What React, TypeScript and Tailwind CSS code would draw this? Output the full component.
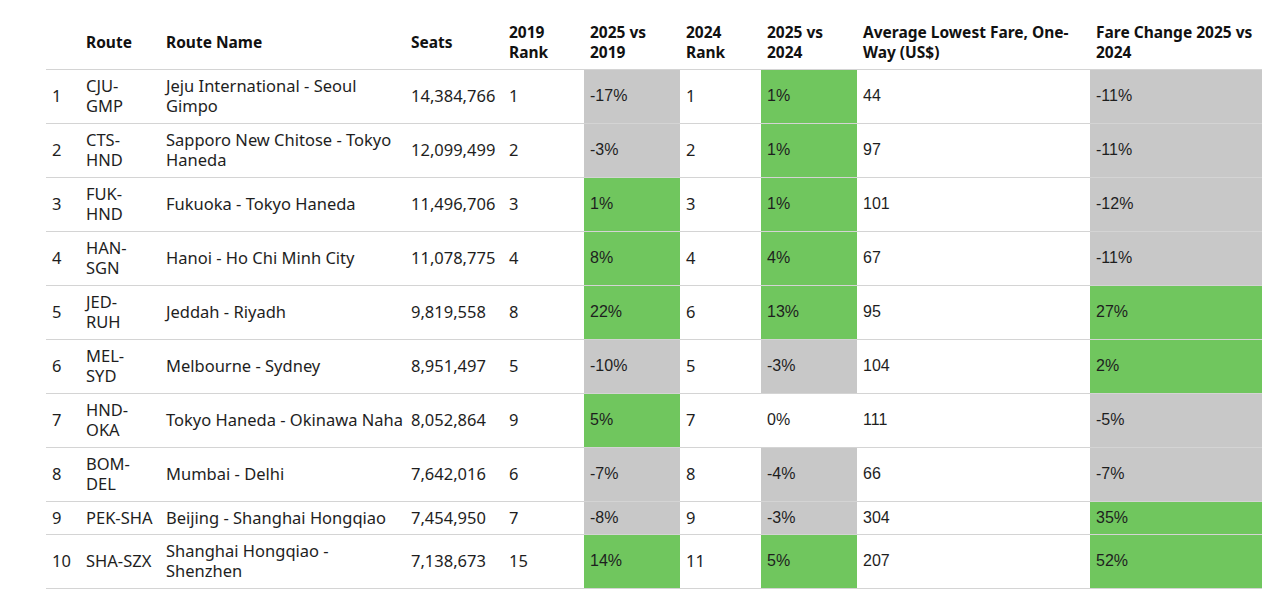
import React from 'react';

type Tone = 'green' | 'gray' | null;

interface RouteRow {
    rank: number;
    code: string[];
    name: string[];
    seats: string;
    rank2019: string;
    vs2019: string;
    vs2019Tone: Tone;
    rank2024: string;
    vs2024: string;
    vs2024Tone: Tone;
    fare: string;
    fareChange: string;
    fareTone: Tone;
    short?: boolean;
}

const rows: RouteRow[] = [
    { rank: 1, code: ['CJU-', 'GMP'], name: ['Jeju International - Seoul', 'Gimpo'], seats: '14,384,766', rank2019: '1', vs2019: '-17%', vs2019Tone: 'gray', rank2024: '1', vs2024: '1%', vs2024Tone: 'green', fare: '44', fareChange: '-11%', fareTone: 'gray' },
    { rank: 2, code: ['CTS-', 'HND'], name: ['Sapporo New Chitose - Tokyo', 'Haneda'], seats: '12,099,499', rank2019: '2', vs2019: '-3%', vs2019Tone: 'gray', rank2024: '2', vs2024: '1%', vs2024Tone: 'green', fare: '97', fareChange: '-11%', fareTone: 'gray' },
    { rank: 3, code: ['FUK-', 'HND'], name: ['Fukuoka - Tokyo Haneda'], seats: '11,496,706', rank2019: '3', vs2019: '1%', vs2019Tone: 'green', rank2024: '3', vs2024: '1%', vs2024Tone: 'green', fare: '101', fareChange: '-12%', fareTone: 'gray' },
    { rank: 4, code: ['HAN-', 'SGN'], name: ['Hanoi - Ho Chi Minh City'], seats: '11,078,775', rank2019: '4', vs2019: '8%', vs2019Tone: 'green', rank2024: '4', vs2024: '4%', vs2024Tone: 'green', fare: '67', fareChange: '-11%', fareTone: 'gray' },
    { rank: 5, code: ['JED-', 'RUH'], name: ['Jeddah - Riyadh'], seats: '9,819,558', rank2019: '8', vs2019: '22%', vs2019Tone: 'green', rank2024: '6', vs2024: '13%', vs2024Tone: 'green', fare: '95', fareChange: '27%', fareTone: 'green' },
    { rank: 6, code: ['MEL-', 'SYD'], name: ['Melbourne - Sydney'], seats: '8,951,497', rank2019: '5', vs2019: '-10%', vs2019Tone: 'gray', rank2024: '5', vs2024: '-3%', vs2024Tone: 'gray', fare: '104', fareChange: '2%', fareTone: 'green' },
    { rank: 7, code: ['HND-', 'OKA'], name: ['Tokyo Haneda - Okinawa Naha'], seats: '8,052,864', rank2019: '9', vs2019: '5%', vs2019Tone: 'green', rank2024: '7', vs2024: '0%', vs2024Tone: null, fare: '111', fareChange: '-5%', fareTone: 'gray' },
    { rank: 8, code: ['BOM-', 'DEL'], name: ['Mumbai - Delhi'], seats: '7,642,016', rank2019: '6', vs2019: '-7%', vs2019Tone: 'gray', rank2024: '8', vs2024: '-4%', vs2024Tone: 'gray', fare: '66', fareChange: '-7%', fareTone: 'gray' },
    { rank: 9, code: ['PEK-SHA'], name: ['Beijing - Shanghai Hongqiao'], seats: '7,454,950', rank2019: '7', vs2019: '-8%', vs2019Tone: 'gray', rank2024: '9', vs2024: '-3%', vs2024Tone: 'gray', fare: '304', fareChange: '35%', fareTone: 'green', short: true },
    { rank: 10, code: ['SHA-SZX'], name: ['Shanghai Hongqiao -', 'Shenzhen'], seats: '7,138,673', rank2019: '15', vs2019: '14%', vs2019Tone: 'green', rank2024: '11', vs2024: '5%', vs2024Tone: 'green', fare: '207', fareChange: '52%', fareTone: 'green' },
];

const toneClass = (tone: Tone) =>
    tone === 'green' ? 'bg-[#70c65e]' : tone === 'gray' ? 'bg-[#c8c8c8]' : '';

const Lines: React.FC<{ lines: string[] }> = ({ lines }) => (
    <>
        {lines.map((l, i) => (
            <React.Fragment key={i}>
                {i > 0 && <br />}
                {l}
            </React.Fragment>
        ))}
    </>
);

const cell = 'px-[6px] align-middle border-b border-[#d4d4d4]';
const plex = "font-['Noto_Sans',sans-serif] text-[16.5px] leading-[20px]";
const arial = "font-['Liberation_Sans',Arial,sans-serif] text-[16px] leading-[20px]";

const App: React.FC = () => {
    return (
        <div className="bg-white min-h-[607px] w-[1283px] pt-[15px] pl-[46px] text-[#1e1e1e]">
            <table className="table-fixed border-collapse w-[1216px]">
                <colgroup>
                    <col className="w-[34px]" />
                    <col className="w-[80px]" />
                    <col className="w-[245px]" />
                    <col className="w-[98px]" />
                    <col className="w-[81px]" />
                    <col className="w-[96px]" />
                    <col className="w-[81px]" />
                    <col className="w-[96px]" />
                    <col className="w-[233px]" />
                    <col className="w-[172px]" />
                </colgroup>
                <thead>
                    <tr className="h-[54px] text-left font-['Noto_Sans',sans-serif] text-[15.5px] leading-[20px] font-bold text-[#111]">
                        <th className={cell}></th>
                        <th className={cell}>Route</th>
                        <th className={cell}>Route Name</th>
                        <th className={cell}>Seats</th>
                        <th className={cell}>2019<br />Rank</th>
                        <th className={cell}>2025 vs<br />2019</th>
                        <th className={cell}>2024<br />Rank</th>
                        <th className={cell}>2025 vs<br />2024</th>
                        <th className={cell}>Average Lowest Fare, One-<br />Way (US$)</th>
                        <th className={cell}>Fare Change 2025 vs<br />2024</th>
                    </tr>
                </thead>
                <tbody>
                    {rows.map(r => (
                        <tr key={r.rank} className={r.short ? 'h-[33px]' : 'h-[54px]'}>
                            <td className={`${cell} ${plex}`}>{r.rank}</td>
                            <td className={`${cell} ${plex} whitespace-nowrap`}><Lines lines={r.code} /></td>
                            <td className={`${cell} ${plex} whitespace-nowrap`}><Lines lines={r.name} /></td>
                            <td className={`${cell} ${plex}`}>{r.seats}</td>
                            <td className={`${cell} ${plex}`}>{r.rank2019}</td>
                            <td className={`${cell} ${arial} ${toneClass(r.vs2019Tone)}`}>{r.vs2019}</td>
                            <td className={`${cell} ${plex}`}>{r.rank2024}</td>
                            <td className={`${cell} ${arial} ${toneClass(r.vs2024Tone)}`}>{r.vs2024}</td>
                            <td className={`${cell} ${arial}`}>{r.fare}</td>
                            <td className={`${cell} ${arial} ${toneClass(r.fareTone)}`}>{r.fareChange}</td>
                        </tr>
                    ))}
                </tbody>
            </table>
        </div>
    );
};

export default App;
